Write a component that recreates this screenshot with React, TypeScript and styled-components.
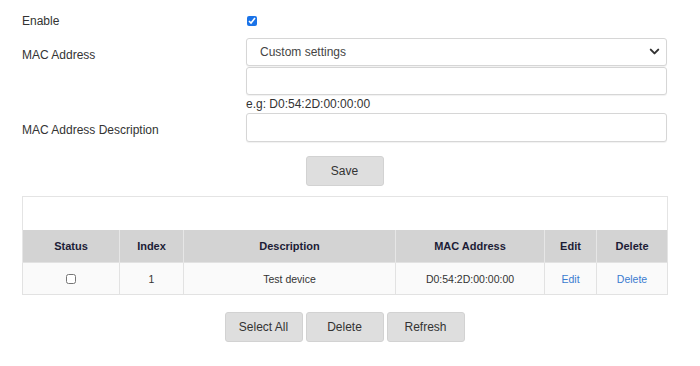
import React from "react"
import { styled, createGlobalStyle } from "styled-components"
import { ChevronDown } from "lucide-react"

type Device = {
    index: number,
    description: string,
    mac: string,
}

const devices: Device[] = [
    { index: 1, description: "Test device", mac: "D0:54:2D:00:00:00" },
]

const columns = [
    { title: "Status", width: 97 },
    { title: "Index", width: 64 },
    { title: "Description", width: 212 },
    { title: "MAC Address", width: 149 },
    { title: "Edit", width: 52 },
    { title: "Delete", width: 71 },
]

export default function App() {
    return (<>
        <GlobalStyle />
        <Page>
            <FieldRow>
                <Label $height={24} $shift={1}>Enable</Label>
                <Control>
                    <EnableRow>
                        <Check type="checkbox" defaultChecked />
                    </EnableRow>
                </Control>
            </FieldRow>

            <FieldRow $top={6}>
                <Label $height={32} $shift={1}>MAC Address</Label>
                <Control>
                    <SelectWrap>
                        <Select defaultValue="custom">
                            <option value="custom">Custom settings</option>
                        </Select>
                        <Arrow size={15} strokeWidth={3.2} />
                    </SelectWrap>
                    <TextInput $top={1} $height={28} />
                    <Hint>e.g: D0:54:2D:00:00:00</Hint>
                </Control>
            </FieldRow>

            <FieldRow>
                <Label $height={29} $shift={3}>MAC Address Description</Label>
                <Control>
                    <TextInput $height={29} />
                </Control>
            </FieldRow>

            <ButtonBar $top={14}>
                <Button>Save</Button>
            </ButtonBar>

            <Table>
                <colgroup>
                    {columns.map((c) => <col key={c.title} style={{ width: c.width }} />)}
                </colgroup>
                <tbody>
                    <tr>
                        <CaptionCell colSpan={columns.length} />
                    </tr>
                    <tr>
                        {columns.map((c) => <Th key={c.title}>{c.title}</Th>)}
                    </tr>
                    {devices.map((d) => (
                        <tr key={d.index}>
                            <Td><RowCheck type="checkbox" /></Td>
                            <Td>{d.index}</Td>
                            <Td>{d.description}</Td>
                            <Td>{d.mac}</Td>
                            <Td><Link href="#">Edit</Link></Td>
                            <Td><Link href="#">Delete</Link></Td>
                        </tr>
                    ))}
                </tbody>
            </Table>

            <ButtonBar $top={17}>
                <Button>Select All</Button>
                <Button>Delete</Button>
                <Button>Refresh</Button>
            </ButtonBar>
        </Page>
    </>)
}

const GlobalStyle = createGlobalStyle`
    body {
        margin: 0;
        background: #ffffff;
        font-family: "Liberation Sans", Arial, sans-serif;
        color: #333333;
    }
`

const Page = styled.div`
    width: 645px;
    padding: 8px 0 0 22px;
`

const FieldRow = styled.div<{ $top?: number }>`
    display: grid;
    grid-template-columns: 224px 421px;
    margin-top: ${(p) => p.$top ?? 0}px;
`

const Label = styled.div<{ $height: number, $shift?: number }>`
    font-size: 12px;
    height: ${(p) => p.$height}px;
    line-height: ${(p) => p.$height}px;
    transform: translateY(${(p) => p.$shift ?? 0}px);
    color: #333333;
`

const Control = styled.div`
    display: flex;
    flex-direction: column;
`

const EnableRow = styled.div`
    height: 24px;
    display: flex;
    align-items: center;
`

const Check = styled.input`
    width: 10px;
    height: 10px;
    margin: 1px 0 0 1px;
    accent-color: #1a73e8;
`

const SelectWrap = styled.div`
    position: relative;
    height: 28px;
`

const Select = styled.select`
    appearance: none;
    width: 100%;
    height: 28px;
    box-sizing: border-box;
    border: 1px solid #d6d6d6;
    border-radius: 3px;
    background: #ffffff;
    padding: 0 30px 0 13px;
    font-family: "Liberation Sans", Arial, sans-serif;
    font-size: 12px;
    color: #444444;
    box-shadow: 0 1px 1px rgba(0, 0, 0, 0.06);
    outline: none;
`

const Arrow = styled(ChevronDown)`
    position: absolute;
    right: 5px;
    top: 6px;
    color: #333333;
    pointer-events: none;
`

const TextInput = styled.input<{ $top?: number, $height: number }>`
    width: 100%;
    height: ${(p) => p.$height}px;
    margin-top: ${(p) => p.$top ?? 0}px;
    box-sizing: border-box;
    border: 1px solid #d6d6d6;
    border-radius: 3px;
    background: #ffffff;
    box-shadow: 0 1px 1px rgba(0, 0, 0, 0.06);
    outline: none;
`

const Hint = styled.div`
    font-size: 12px;
    line-height: 18px;
    color: #333333;
`

const ButtonBar = styled.div<{ $top: number }>`
    display: flex;
    justify-content: center;
    gap: 3px;
    margin-top: ${(p) => p.$top}px;
`

const Button = styled.button`
    width: 78px;
    height: 30px;
    border: 1px solid #d2d2d2;
    border-radius: 3px;
    background: #dedede;
    font-family: "Liberation Sans", Arial, sans-serif;
    font-size: 12px;
    color: #333333;
    padding: 0;
    cursor: pointer;
`

const Table = styled.table`
    width: 645px;
    margin-top: 10px;
    border-collapse: collapse;
    table-layout: fixed;
    border: 1px solid #e4e4e4;
`

const CaptionCell = styled.td`
    height: 33px;
    background: #ffffff;
    padding: 0;
`

const Th = styled.th`
    height: 32px;
    padding: 0;
    background: #d3d3d3;
    border-left: 1px solid #e6e6e6;
    font-size: 11px;
    font-weight: bold;
    color: #1c1c36;
    text-align: center;
`

const Td = styled.td`
    height: 31px;
    padding: 0;
    background: #fafafa;
    border: 1px solid #e2e2e2;
    font-size: 10.5px;
    color: #333333;
    text-align: center;
    vertical-align: middle;
`

const RowCheck = styled.input`
    width: 10px;
    height: 10px;
    margin: 2px 0 0 0;
`

const Link = styled.a`
    color: #3a7bd0;
    text-decoration: none;
`
